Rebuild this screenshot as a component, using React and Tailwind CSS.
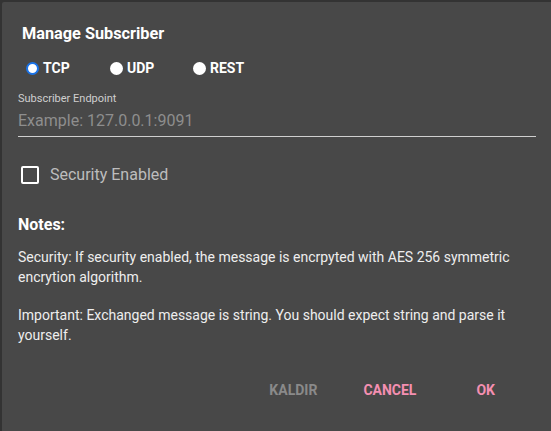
const protocols = [
  { id: "tcp", label: "TCP", checked: true },
  { id: "udp", label: "UDP" },
  { id: "rest", label: "REST" },
];

function Radio({ label, checked }) {
  return (
    <label className="flex items-center gap-[4px] cursor-pointer">
      {checked ? (
        <span className="w-[13px] h-[13px] rounded-full border-[2px] border-[#1a73e8] bg-white" />
      ) : (
        <span className="w-[13px] h-[13px] rounded-full bg-white" />
      )}
      <span className="text-[14px] font-bold text-white">{label}</span>
    </label>
  );
}

export default function App() {
  return (
    <div
      className="w-[551px] h-[431px] bg-[#333333] pl-[2px] pt-[2px] overflow-hidden"
      style={{ fontFamily: "Roboto, 'Liberation Sans', sans-serif" }}
    >
      <div className="w-full h-full bg-[#484848] rounded-tl-[2px] flex flex-col">
        <h2 className="pl-[20px] pt-[22px] text-[16.3px] font-bold text-white leading-[20px]">
          Manage Subscriber
        </h2>

        <div className="flex items-center pl-[24px] pt-[14px]">
          <div className="w-[84px]"><Radio {...protocols[0]} /></div>
          <div className="w-[83px]"><Radio {...protocols[1]} /></div>
          <Radio {...protocols[2]} />
        </div>

        <div className="pl-[16px] pr-[15px] pt-[13px]">
          <div className="text-[11px] text-[#cfcfcf] leading-[14px]">Subscriber Endpoint</div>
          <div className="border-b border-[#cfcfcf] pt-[5px] pb-[5px] text-[16px] leading-[20px] text-[#8e8e8e]">
            Example: 127.0.0.1:9091
          </div>
        </div>

        <div className="flex items-center pl-[19px] pt-[28px] gap-[11px]">
          <span className="w-[18px] h-[18px] border-[2px] border-white rounded-[2px]" />
          <span className="text-[16px] text-[#bdbdbd] leading-[20px]">Security Enabled</span>
        </div>

        <div className="pl-[16px] pr-[20px] pt-[30px] text-white">
          <div className="text-[16px] font-bold leading-[20px]">Notes:</div>
          <p className="pt-[12px] text-[14px] leading-[20px] text-[#eeeeee] w-[500px]">
            Security: If security enabled, the message is encrpyted with AES 256 symmetric encrytion algorithm.
          </p>
          <p className="pt-[18px] text-[14px] leading-[20px] text-[#eeeeee] w-[500px]">
            Important: Exchanged message is string. You should expect string and parse it yourself.
          </p>
        </div>

        <div className="flex justify-end items-center pt-[35px] pr-[56px] text-[14px] font-bold leading-[20px]">
          <button className="text-[#8a8a8a] mr-[46px]">KALDIR</button>
          <button className="text-[#f48fb1] mr-[60px]">CANCEL</button>
          <button className="text-[#f48fb1]">OK</button>
        </div>
      </div>
    </div>
  );
}
